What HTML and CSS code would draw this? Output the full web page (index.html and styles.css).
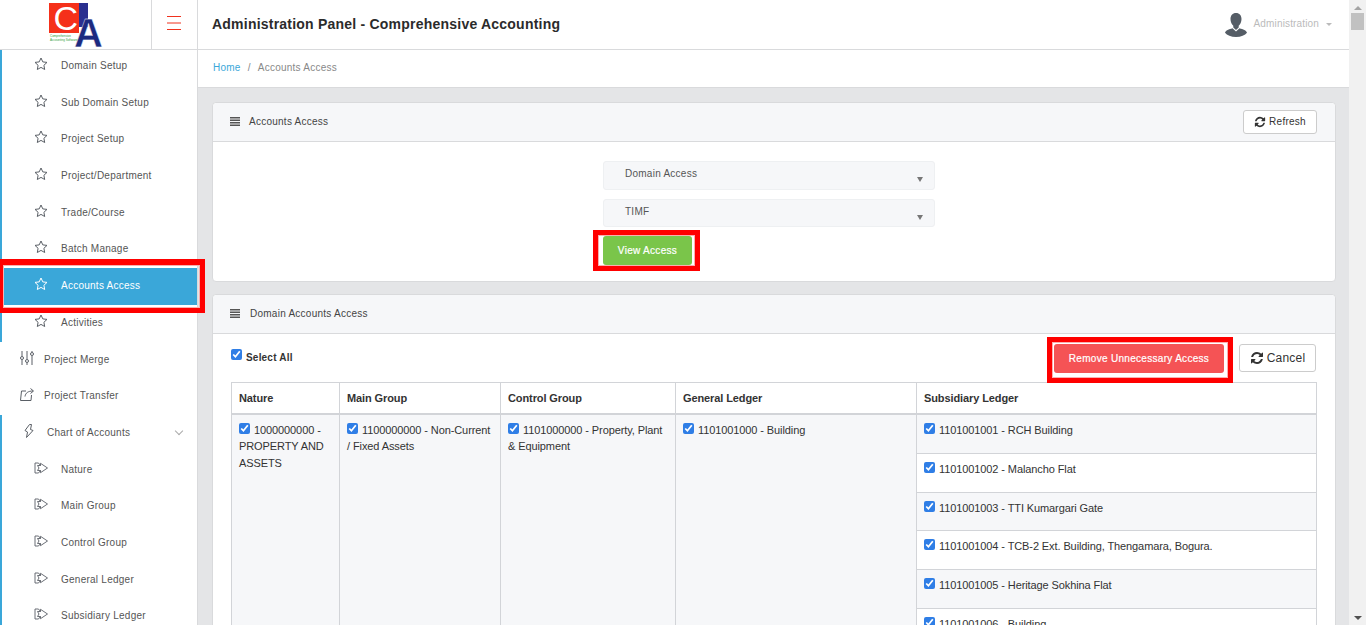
FILE: index.html
```html
<!DOCTYPE html>
<html lang="en">
<head>
    <meta charset="UTF-8">
    <meta name="viewport" content="width=device-width, initial-scale=1.0">
    <title>Accounts Access</title>
    <link rel="stylesheet" href="styles.css">
</head>
<body>
    <svg class="icon-defs" width="0" height="0">
        <symbol id="i-star" viewBox="0 0 14 14"><path d="M7 1l1.8 3.9 4.2.5-3.1 2.9.8 4.2L7 10.4l-3.700 2.100.8-4.200L1 5.400l4.200-.5z" fill="none" stroke="currentColor"/></symbol>
        <symbol id="i-forward" viewBox="0 0 14 11"><path d="M1 .5v10M1 .5h3.500l2 2.500M1 10.500h3.500l2-2.500M3.500 3h3V.8l7 4.700-7 4.700V8h-3l1.500-2.500z" fill="none" stroke="currentColor" stroke-width=".9"/></symbol>
        <symbol id="i-sliders" viewBox="0 0 13 14"><path d="M1.500 0v5M1.500 9v5M6.500 0v8M6.500 12v2M11.500 0v1M11.500 5v9" fill="none" stroke="currentColor"/><circle cx="1.500" cy="7" r="1.500" fill="none" stroke="currentColor"/><circle cx="6.500" cy="10" r="1.500" fill="none" stroke="currentColor"/><circle cx="11.500" cy="3" r="1.500" fill="none" stroke="currentColor"/></symbol>
        <symbol id="i-share" viewBox="0 0 14 14"><path d="M6 4H1.500L.5 13.500h10.500L11.500 8M5 9.500c.5-3.500 3-5.500 8-5.500M10.500 1.500L13.500 4l-3 2.500" fill="none" stroke="currentColor"/></symbol>
        <symbol id="i-energy" viewBox="0 0 10 14"><path d="M5.500.5L1 6.500l2.500 1.500L2.500 13.500 9 6.500 6.500 5.500 7.500.5z" fill="none" stroke="currentColor"/></symbol>
        <symbol id="i-refresh" viewBox="0 0 1792 1792"><path d="M1639 1056q0 5-1 7-64 268-268 434.500t-478 166.500q-146 0-282.500-55t-243.500-157l-129 129q-19 19-45 19t-45-19-19-45v-448q0-26 19-45t45-19h448q26 0 45 19t19 45-19 45l-137 137q71 66 161 102t187 36q134 0 250-65t186-179q11-17 53-117 8-23 30-23h192q13 0 22.500 9.500t9.500 22.500zm25-800v448q0 26-19 45t-45 19h-448q-26 0-45-19t-19-45 19-45l138-138q-148-137-349-137-134 0-250 65t-186 179q-11 17-53 117-8 23-30 23h-199q-13 0-22.500-9.500t-9.500-22.500v-7q65-268 270-434.500t480-166.500q146 0 284 55.500t245 156.500l130-129q19-19 45-19t45 19 19 45z" fill="currentColor"/></symbol>
        <symbol id="i-lines" viewBox="0 0 10 9"><path d="M0 0h10v1.500H0zM0 2.500h10V4H0zM0 5h10v1.500H0zM0 7.500h10V9H0z" fill="currentColor"/></symbol>
    </svg>

    <div class="page">
        <header class="topbar">
            <div class="logo-box">
                <svg class="logo" viewBox="0 0 56 46" width="56" height="46">
                    <rect x="0" y="1" width="30" height="30" fill="#f5301a"/>
                    <rect x="30" y="1" width="9" height="24" fill="#2a2f8f"/>
                    <text x="4.500" y="28" class="logo-c">C</text>
                    <text x="25" y="45" class="logo-a">A</text>
                    <text x="1" y="34.500" class="logo-small">Comprehensive</text>
                    <text x="1" y="38.500" class="logo-small">Accounting Software</text>
                </svg>
            </div>
            <div class="menu-box">
                <svg class="burger" viewBox="0 0 14 14" width="14" height="14">
                    <path d="M0 .5h14M0 7h14M0 13.500h14" stroke="#f0321e" fill="none"/>
                </svg>
            </div>
            <h1 class="page-title">Administration Panel - Comprehensive Accounting</h1>
            <div class="user-box">
                <svg class="avatar" viewBox="0 0 22 24" width="22" height="24">
                    <path d="M11 0c3.500 0 5.500 2.600 5.500 6 0 2.700-1.200 5.400-2.800 6.800v1.700L11 17l-2.700-2.500v-1.700C6.700 11.400 5.500 8.700 5.500 6c0-3.400 2-6 5.500-6z" fill="#555d66"/>
                    <path d="M7.500 15.300L11 18.500l3.500-3.200c3.500 1 7 2.200 7.500 4.500-2 2.700-6 4.200-11 4.200S2 22.500 0 19.800c.5-2.300 4-3.500 7.500-4.500z" fill="#555d66"/>
                </svg>
                <span class="user-name">Administration</span>
                <span class="caret"></span>
            </div>
        </header>

        <div class="main">
            <nav class="sidebar">
                <ul class="nav-group">
                    <li class="nav-item"><svg class="nav-icon"><use href="#i-star"/></svg>Domain Setup</li>
                    <li class="nav-item"><svg class="nav-icon"><use href="#i-star"/></svg>Sub Domain Setup</li>
                    <li class="nav-item"><svg class="nav-icon"><use href="#i-star"/></svg>Project Setup</li>
                    <li class="nav-item"><svg class="nav-icon"><use href="#i-star"/></svg>Project/Department</li>
                    <li class="nav-item"><svg class="nav-icon"><use href="#i-star"/></svg>Trade/Course</li>
                    <li class="nav-item"><svg class="nav-icon"><use href="#i-star"/></svg>Batch Manage</li>
                    <li class="nav-item active"><svg class="nav-icon"><use href="#i-star"/></svg>Accounts Access<span class="mark mark-nav"></span></li>
                    <li class="nav-item"><svg class="nav-icon"><use href="#i-star"/></svg>Activities</li>
                </ul>
                <ul class="nav-plain">
                    <li class="nav-item top"><svg class="nav-icon"><use href="#i-sliders"/></svg>Project Merge</li>
                    <li class="nav-item top"><svg class="nav-icon"><use href="#i-share"/></svg>Project Transfer</li>
                </ul>
                <ul class="nav-group">
                    <li class="nav-item chart"><svg class="nav-icon"><use href="#i-energy"/></svg>Chart of Accounts<span class="chevron"></span></li>
                    <li class="nav-item"><svg class="nav-icon"><use href="#i-forward"/></svg>Nature</li>
                    <li class="nav-item"><svg class="nav-icon"><use href="#i-forward"/></svg>Main Group</li>
                    <li class="nav-item"><svg class="nav-icon"><use href="#i-forward"/></svg>Control Group</li>
                    <li class="nav-item"><svg class="nav-icon"><use href="#i-forward"/></svg>General Ledger</li>
                    <li class="nav-item"><svg class="nav-icon"><use href="#i-forward"/></svg>Subsidiary Ledger</li>
                </ul>
            </nav>

            <div class="content">
                <div class="breadcrumb"><a class="crumb-link">Home</a><span class="crumb-sep">/</span><span>Accounts Access</span></div>

                <div class="panels">
                    <section class="card">
                        <div class="card-head">
                            <svg class="head-icon"><use href="#i-lines"/></svg>
                            <span>Accounts Access</span>
                            <button class="btn-plain btn-refresh"><svg class="refresh-icon"><use href="#i-refresh"/></svg>Refresh</button>
                        </div>
                        <div class="filter-form">
                            <div class="select-box"><span>Domain Access</span></div>
                            <div class="select-box second"><span>TIMF</span></div>
                            <div class="marked">
                                <button class="btn-view">View Access</button>
                                <span class="mark mark-view"></span>
                            </div>
                        </div>
                    </section>

                    <section class="card">
                        <div class="card-head second-head">
                            <svg class="head-icon"><use href="#i-lines"/></svg>
                            <span>Domain Accounts Access</span>
                        </div>
                        <div class="card-body">
                            <div class="tools">
                                <label class="select-all"><input type="checkbox" checked>Select All</label>
                                <div class="marked">
                                    <button class="btn-remove">Remove Unnecessary Access</button>
                                    <span class="mark mark-remove"></span>
                                </div>
                                <button class="btn-plain btn-cancel"><svg class="refresh-icon"><use href="#i-refresh"/></svg>Cancel</button>
                            </div>
                            <table class="access-table">
                                <thead>
                                    <tr>
                                        <th class="col-nature">Nature</th>
                                        <th class="col-main">Main Group</th>
                                        <th class="col-control">Control Group</th>
                                        <th class="col-general">General Ledger</th>
                                        <th>Subsidiary Ledger</th>
                                    </tr>
                                </thead>
                                <tbody>
                                    <tr class="odd">
                                        <td rowspan="6"><input type="checkbox" checked>1000000000 - PROPERTY AND ASSETS</td>
                                        <td rowspan="6"><input type="checkbox" checked>1100000000 - Non-Current / Fixed Assets</td>
                                        <td rowspan="6"><input type="checkbox" checked>1101000000 - Property, Plant &amp; Equipment</td>
                                        <td rowspan="6"><input type="checkbox" checked>1101001000 - Building</td>
                                        <td class="first-sub"><input type="checkbox" checked>1101001001 - RCH Building</td>
                                    </tr>
                                    <tr><td><input type="checkbox" checked>1101001002 - Malancho Flat</td></tr>
                                    <tr class="odd"><td><input type="checkbox" checked>1101001003 - TTI Kumargari Gate</td></tr>
                                    <tr><td><input type="checkbox" checked>1101001004 - TCB-2 Ext. Building, Thengamara, Bogura.</td></tr>
                                    <tr class="odd"><td><input type="checkbox" checked>1101001005 - Heritage Sokhina Flat</td></tr>
                                    <tr><td><input type="checkbox" checked>1101001006 - Building</td></tr>
                                </tbody>
                            </table>
                        </div>
                    </section>
                </div>
            </div>
        </div>
    </div>

    <div class="scrollbar">
        <span class="arrow-up"></span>
        <span class="thumb"></span>
        <span class="arrow-down"></span>
    </div>
</body>
</html>
```

FILE: styles.css
```css
* {
    box-sizing: border-box;
}
html, body {
    height: 625px;
    overflow: hidden;
}
body {
    font-family: "Liberation Sans", Arial, sans-serif;
    display: flex;
    margin: 0;
    padding: 0;
    background: #fff;
    color: #333;
}
ul {
    list-style-type: none;
    margin: 0;
    padding: 0;
}
button {
    font-family: inherit;
    cursor: pointer;
}
.icon-defs {
    position: absolute;
}
.page {
    flex: 1;
    min-width: 0;
    display: flex;
    flex-direction: column;
}

/* top bar */
.topbar {
    height: 50px;
    flex: none;
    display: flex;
    align-items: center;
    position: relative;
    z-index: 2;
    background: #fff;
    border-bottom: 1px solid #d9dadc;
}
.logo-box {
    width: 152px;
    height: 49px;
    padding: 2px 0 0 49px;
    border-right: 1px solid #d9dadc;
}
.logo {
    display: block;
}
.logo-c {
    font: 34px "Liberation Sans", sans-serif;
    fill: #fff;
}
.logo-a {
    font: bold 40px "Liberation Sans", sans-serif;
    fill: #1c2a80;
    stroke: #fff;
    stroke-width: 0.4px;
}
.logo-small {
    font: 3px "Liberation Sans", sans-serif;
    fill: #2f9e3a;
}
.menu-box {
    width: 46px;
    height: 49px;
    padding-bottom: 3px;
    padding-right: 1px;
    display: flex;
    align-items: center;
    justify-content: center;
    border-right: 1px solid #d9dadc;
}
.page-title {
    margin: 0 0 2px 14px;
    font-size: 14px;
    font-weight: 700;
    letter-spacing: 0.22px;
    color: #2b2b2b;
}
.user-box {
    margin-left: auto;
    padding-right: 17px;
    display: flex;
    align-items: center;
    color: #bbb;
    font-size: 10px;
    letter-spacing: 0.15px;
}
.avatar {
    margin-right: 7px;
}
.user-name {
    margin-top: -2px;
}
.caret {
    margin-left: 7px;
    border: 3px solid transparent;
    border-top: 3px solid #bbb;
    border-bottom: 0;
}

.main {
    flex: 1;
    min-height: 0;
    display: flex;
}

/* side menu */
.sidebar {
    width: 198px;
    flex: none;
    position: relative;
    z-index: 1;
    background: #fff;
    border-right: 1px solid #d9dadc;
}
.nav-group {
    border-left: 2px solid #3aa7d9;
}
.sidebar > .nav-group:first-child {
    margin-top: -2px;
}
.nav-item {
    height: 36.7px;
    padding: 10px 0 0 32px;
    display: flex;
    align-items: flex-start;
    position: relative;
    font-size: 10px;
    line-height: 15px;
    letter-spacing: 0.25px;
    color: #555;
}
.nav-item.top {
    padding-left: 20px;
}
.nav-item.chart {
    padding-left: 20px;
}
.nav-icon {
    width: 14px;
    height: 14px;
    margin: -1px 13px 0 0;
    flex: none;
    color: #5a5f66;
}
.nav-item.top .nav-icon {
    margin-right: 10px;
}
.nav-item.chart .nav-icon {
    margin-right: 11px;
}
.nav-item.active {
    background: #3aa7d9;
    color: #fff;
}
.nav-item.active .nav-icon {
    color: #fff;
}
.chevron {
    width: 6px;
    height: 6px;
    margin-left: auto;
    margin-right: 15px;
    margin-top: 3px;
    border-right: 1px solid #aaa;
    border-bottom: 1px solid #aaa;
    transform: rotate(45deg);
}

/* content */
.content {
    flex: 1;
    min-width: 0;
    display: flex;
    flex-direction: column;
    background: #e4e5e7;
}
.breadcrumb {
    height: 38px;
    flex: none;
    padding: 0 15px 3px;
    display: flex;
    align-items: center;
    background: #fff;
    border-bottom: 1px solid #d9dadc;
    font-size: 10px;
    letter-spacing: 0.25px;
    color: #888;
}
.crumb-link {
    color: #3aa7d9;
}
.crumb-sep {
    margin: 0 7px;
}
.panels {
    padding: 14px 13px 0 14px;
    display: flex;
    flex-direction: column;
    gap: 12px;
}
.card {
    background: #fff;
    border: 1px solid #d9dadc;
    border-radius: 4px;
}
.card-head {
    height: 39px;
    padding: 0 18px 1px 17px;
    display: flex;
    align-items: center;
    background: #f6f7f9;
    border-bottom: 1px solid #d9dadc;
    border-radius: 4px 4px 0 0;
    font-size: 10px;
    letter-spacing: 0.25px;
    color: #444;
}
.head-icon {
    width: 10px;
    height: 9px;
    margin-right: 9px;
    color: #555;
}
.second-head .head-icon {
    margin-right: 10px;
}
.btn-plain {
    display: flex;
    align-items: center;
    background: #fff;
    border: 1px solid #ccc;
    border-radius: 3px;
    color: #333;
}
.btn-refresh {
    width: 74px;
    height: 24px;
    margin-left: auto;
    justify-content: center;
    font-size: 10px;
    letter-spacing: 0.25px;
}
.refresh-icon {
    width: 12px;
    height: 12px;
    margin-right: 3px;
}

.filter-form {
    height: 139px;
    width: 332px;
    margin-left: 390px;
    padding-top: 19px;
}
.select-box {
    height: 29px;
    padding: 5px 21px;
    position: relative;
    background: #f6f7f9;
    border: 1px solid #eef0f2;
    border-radius: 3px;
    font-size: 10px;
    letter-spacing: 0.25px;
    line-height: 14px;
    color: #555;
}
.select-box.second {
    height: 28px;
    margin-top: 9px;
    margin-bottom: 9px;
}
.select-box::after {
    content: "";
    position: absolute;
    right: 11px;
    top: 15px;
    border: 3px solid transparent;
    border-top: 5px solid #777;
    border-bottom: 0;
}
.marked {
    position: relative;
    width: fit-content;
}
.mark {
    position: absolute;
    border: 5px solid #f00;
    box-shadow: inset 0 0 0 1px #f9b0b0;
    pointer-events: none;
}
.mark-nav {
    top: -9px;
    bottom: -8px;
    left: -2px;
    right: -8px;
    z-index: 2;
    border-left-width: 3px;
    border-top-width: 6px;
}
.mark-view {
    top: -6px;
    bottom: -6px;
    left: -10px;
    right: -8px;
}
.mark-remove {
    top: -7px;
    bottom: -10px;
    left: -7px;
    right: -9px;
}
.btn-view, .btn-remove {
    display: block;
    height: 29px;
    padding: 0 0 1px;
    border: 0;
    border-radius: 3px;
    color: #fff;
    font-size: 10px;
    letter-spacing: 0.3px;
    -webkit-text-stroke: 0.2px #fff;
}
.btn-view {
    width: 89px;
    background: #7ac54a;
}
.btn-remove {
    width: 170px;
    background: #f55355;
}

.card-body {
    padding: 0 19px 0 18px;
}
.tools {
    height: 48px;
    padding-top: 10px;
    display: flex;
    align-items: flex-start;
}
.select-all {
    display: flex;
    align-items: center;
    margin-right: auto;
    padding-top: 8px;
    font-size: 10px;
    font-weight: 700;
    letter-spacing: 0.2px;
}
.select-all input {
    margin: -7px 4px 0 0;
}
input[type="checkbox"] {
    width: 11px;
    height: 11px;
    accent-color: #2f7ee6;
}
.btn-cancel {
    width: 77px;
    height: 28px;
    margin-left: 15px;
    justify-content: center;
    font-size: 12px;
    letter-spacing: 0.2px;
}
.btn-cancel .refresh-icon {
    width: 14px;
    height: 14px;
}

.access-table {
    width: calc(100% + 1px);
    table-layout: fixed;
    border-collapse: collapse;
    font-size: 11px;
    letter-spacing: -0.1px;
    line-height: 16.500px;
}
.access-table th, .access-table td {
    border: 1px solid #d2d4d8;
    padding: 7px;
    text-align: left;
    vertical-align: top;
}
.access-table th {
    padding: 7px 7px 6px;
    font-weight: 700;
    border-bottom-width: 2px;
}
.access-table td {
    background: #fff;
    height: 38.8px;
}
.access-table td.first-sub {
    height: 39.8px;
}
.access-table tr.odd td {
    background: #f6f7f9;
}
.access-table td input {
    margin: 0 4px 0 0;
}
.col-nature {
    width: 108px;
}
.col-main {
    width: 161px;
}
.col-control {
    width: 175px;
}
.col-general {
    width: 241px;
}

/* drawn scroll bar */
.scrollbar {
    width: 17px;
    flex: none;
    position: relative;
    background: #f1f1f1;
    display: flex;
    flex-direction: column;
    align-items: center;
}
.arrow-up {
    margin-top: 6px;
    border: 4px solid transparent;
    border-bottom: 4px solid #a3a3a3;
    border-top: 0;
}
.thumb {
    width: 13px;
    height: 17px;
    margin-top: 3px;
    background: #c1c1c1;
}
.arrow-down {
    margin-top: auto;
    margin-bottom: 5px;
    border: 4px solid transparent;
    border-top: 4px solid #505050;
    border-bottom: 0;
}
```
